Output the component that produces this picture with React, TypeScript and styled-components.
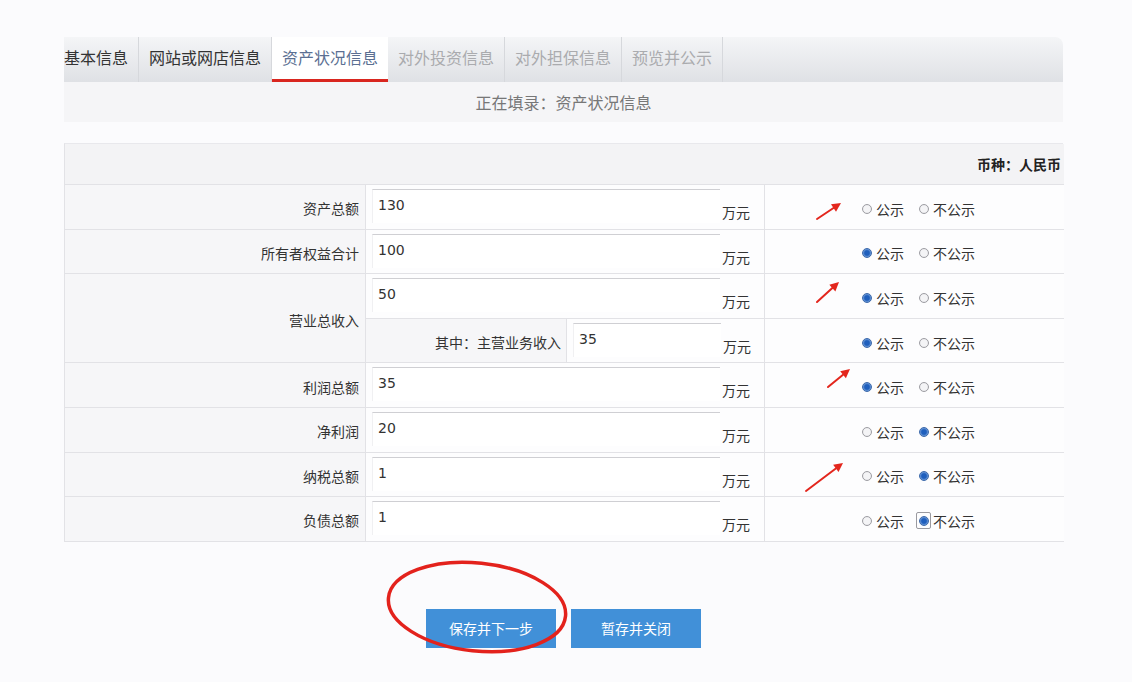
import { Fragment } from 'react';
import styled, { createGlobalStyle, css } from 'styled-components';

const GlobalStyle = createGlobalStyle`
  html, body {
    margin: 0;
    padding: 0;
    background: #fbfbfd;
  }
  body {
    font-family: "Noto Sans CJK SC", "Noto Sans", "Liberation Sans", sans-serif;
    color: #333;
  }
`;

type Row = {
    label: string;
    value: string;
    pub: boolean | null;
    focus?: boolean;
    sub?: { label: string; value: string; pub: boolean | null };
};

const tabs = [
    { name: '基本信息', state: 'done' },
    { name: '网站或网店信息', state: 'done' },
    { name: '资产状况信息', state: 'active' },
    { name: '对外投资信息', state: 'off' },
    { name: '对外担保信息', state: 'off' },
    { name: '预览并公示', state: 'off' },
];

const rows: Row[] = [
    { label: '资产总额', value: '130', pub: null },
    { label: '所有者权益合计', value: '100', pub: true },
    { label: '营业总收入', value: '50', pub: true, sub: { label: '其中：主营业务收入', value: '35', pub: true } },
    { label: '利润总额', value: '35', pub: true },
    { label: '净利润', value: '20', pub: false },
    { label: '纳税总额', value: '1', pub: false },
    { label: '负债总额', value: '1', pub: false, focus: true },
];

// red markup drawn over the screenshot: arrows + circle round the button
const arrows = [
    [817, 219, 841, 203],
    [817, 302, 839, 282],
    [828, 387, 850, 369],
    [806, 491, 843, 463],
];

const Radio = ({ checked, focus, text }: { checked: boolean; focus?: boolean; text: string }) => (
    <RadioLabel>
        <Focus $on={!!focus}>
            <Dot $checked={checked}/>
        </Focus>
        {text}
    </RadioLabel>
);

const App = () => {
    return (
        <Page>
            <GlobalStyle/>
            <Panel>
                <TabBar>
                    {tabs.map((t, i) => (
                        <Tab key={t.name} $state={t.state} $first={i === 0}>{t.name}</Tab>
                    ))}
                </TabBar>
                <SubBar>正在填录：资产状况信息</SubBar>

                <Table>
                    <Header>币种：人民币</Header>
                    {rows.map((r) => (
                        <Fragment key={r.label}>
                            <LabelCell $span={r.sub ? 2 : 1}>{r.label}</LabelCell>
                            <ValueCell>
                                <Input readOnly value={r.value} $width={348}/>
                                <Unit>万元</Unit>
                            </ValueCell>
                            <RadioCell>
                                <Radio checked={r.pub === true} text="公示"/>
                                <Radio checked={r.pub === false} focus={r.focus} text="不公示"/>
                            </RadioCell>
                            {r.sub && (
                                <>
                                    <ValueCell>
                                        <SubLabel>{r.sub.label}</SubLabel>
                                        <Input readOnly value={r.sub.value} $width={148}/>
                                        <Unit>万元</Unit>
                                    </ValueCell>
                                    <RadioCell>
                                        <Radio checked={r.sub.pub === true} text="公示"/>
                                        <Radio checked={r.sub.pub === false} text="不公示"/>
                                    </RadioCell>
                                </>
                            )}
                        </Fragment>
                    ))}
                </Table>

                <ButtonRow>
                    <Button>保存并下一步</Button>
                    <Button>暂存并关闭</Button>
                </ButtonRow>
            </Panel>

            <Markup width="1132" height="682" viewBox="0 0 1132 682">
                {arrows.map(([x1, y1, x2, y2], i) => {
                    const a = Math.atan2(y2 - y1, x2 - x1);
                    const hl = 9, hw = 4.5;
                    const bx = x2 - Math.cos(a) * hl, by = y2 - Math.sin(a) * hl;
                    const nx = -Math.sin(a) * hw, ny = Math.cos(a) * hw;
                    return (
                        <g key={i} fill="#e3261d" stroke="#e3261d">
                            <line x1={x1} y1={y1} x2={bx} y2={by} strokeWidth="2" strokeLinecap="round"/>
                            <polygon points={`${x2},${y2} ${bx + nx},${by + ny} ${bx - nx},${by - ny}`} stroke="none"/>
                        </g>
                    );
                })}
                <ellipse cx="477" cy="607" rx="89" ry="44" fill="none" stroke="#e3221c" strokeWidth="3.5"
                         transform="rotate(6 477 607)"/>
            </Markup>
        </Page>
    );
};

const Page = styled.div`
  position: relative;
  width: 1132px;
  height: 682px;
  box-sizing: border-box;
  padding: 37px 0 0 64px;
  overflow: hidden;
`;

const Panel = styled.div`
  width: 999px;
`;

const TabBar = styled.div`
  display: flex;
  height: 45px;
  background: linear-gradient(#f4f5f7, #dfe1e5);
  border-top-right-radius: 8px;
`;

const Tab = styled.div<{ $state: string; $first: boolean }>`
  display: flex;
  align-items: center;
  box-sizing: border-box;
  padding: 0 10px 5px ${p => (p.$first ? '0' : '10px')};
  font-size: 16px;
  color: #333;
  border-right: 1px solid #d6d8dc;
  white-space: nowrap;
  ${p => p.$state === 'active' && css`
    background: #fff;
    color: #5b6f92;
    border-right: none;
    border-bottom: 3px solid #d9261f;
    padding-bottom: 2px;
  `}
  ${p => p.$state === 'off' && css`
    color: #aaabae;
  `}
`;

const SubBar = styled.div`
  height: 40px;
  display: flex;
  align-items: center;
  justify-content: center;
  background: #f5f5f7;
  font-size: 16px;
  color: #777;
`;

const Table = styled.div`
  margin-top: 21px;
  display: grid;
  grid-template-columns: 301px 399px 299px;
  grid-template-rows: 41px;
  grid-auto-rows: 44.6px;
  border-left: 1px solid #e2e2e6;
  border-top: 1px solid #e8e8ec;
`;

const cell = css`
  box-sizing: border-box;
  border-bottom: 1px solid #e2e2e6;
`;

const Header = styled.div`
  ${cell};
  grid-column: 1 / -1;
  display: flex;
  align-items: center;
  justify-content: flex-end;
  padding: 0 3px 0 0;
  background: #f3f3f5;
  font-size: 14px;
  font-weight: bold;
  color: #222;
`;

const LabelCell = styled.div<{ $span: number }>`
  ${cell};
  grid-row: span ${p => p.$span};
  display: flex;
  align-items: center;
  justify-content: flex-end;
  padding: 3px 6px 0 0;
  background: #f6f6f8;
  border-right: 1px solid #e2e2e6;
  font-size: 14px;
  color: #333;
`;

const ValueCell = styled.div`
  ${cell};
  display: flex;
  align-items: flex-start;
  border-right: 1px solid #e2e2e6;
  background: #fdfdfe;
`;

const SubLabel = styled.div`
  align-self: stretch;
  width: 201px;
  box-sizing: border-box;
  display: flex;
  align-items: center;
  justify-content: flex-end;
  padding: 3px 5px 0 0;
  background: #f6f6f8;
  border-right: 1px solid #e2e2e6;
  font-size: 14px;
  color: #333;
`;

const Input = styled.input<{ $width: number }>`
  width: ${p => p.$width}px;
  height: 34px;
  box-sizing: border-box;
  margin: 4px 0 0 6px;
  padding: 3px 5px 6px;
  border: none;
  border-top: 1px solid #cfcfd3;
  border-left: 1px solid #f0f0f2;
  background: #fff;
  font-family: "DejaVu Sans", "Liberation Sans", sans-serif;
  font-size: 14px;
  color: #333;
  outline: none;
`;

const Unit = styled.span`
  margin: 18px 0 0 2px;
  line-height: 18px;
  font-size: 14px;
  color: #333;
`;

const RadioCell = styled.div`
  ${cell};
  display: flex;
  align-items: center;
  padding: 4px 0 0 96px;
  background: #fdfdfe;
`;

const RadioLabel = styled.label`
  display: inline-flex;
  align-items: center;
  gap: 4px;
  margin-right: 14px;
  font-size: 14px;
  color: #333;
`;

const Focus = styled.span<{ $on: boolean }>`
  display: inline-flex;
  align-items: center;
  justify-content: center;
  width: 13px;
  height: 15px;
  border: 1px solid ${p => (p.$on ? '#9a9aa0' : 'transparent')};
  border-radius: 2px;
  margin: 0 -2px;
`;

const Dot = styled.span<{ $checked: boolean }>`
  display: block;
  width: 10px;
  height: 10px;
  box-sizing: border-box;
  border-radius: 50%;
  border: 1px solid ${p => (p.$checked ? '#3a68aa' : '#9d9da3')};
  background: ${p => (p.$checked
        ? 'radial-gradient(circle, #1f5fbd 0 40%, #6d9ad8 70%, #dbe6f5 100%)'
        : 'radial-gradient(circle, #f4f4f6 0 55%, #d8d8dc 100%)')};
`;

const ButtonRow = styled.div`
  display: flex;
  justify-content: center;
  gap: 15px;
  margin-top: 67px;
`;

const Button = styled.button`
  width: 130px;
  height: 39px;
  border: none;
  background: #4190d8;
  color: #fff;
  font-family: inherit;
  font-size: 14px;
`;

const Markup = styled.svg`
  position: absolute;
  left: 0;
  top: 0;
  pointer-events: none;
`;

export default App;
